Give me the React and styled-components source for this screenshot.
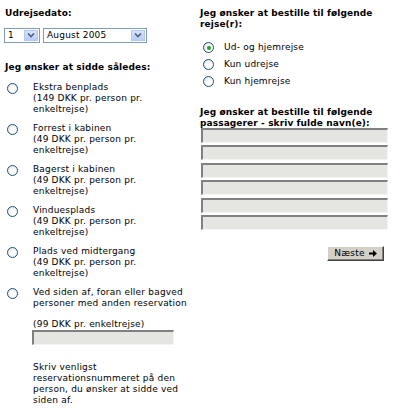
import React from 'react';
import styled, { createGlobalStyle } from 'styled-components';

const GlobalStyle = createGlobalStyle`
  body {
    margin: 0;
    background: #fff;
    font-family: "DejaVu Sans", Verdana, sans-serif;
    font-size: 9px;
    line-height: 11px;
    letter-spacing: 0.2px;
    color: #000;
  }
`;

const Page = styled.div`
  display: flex;
  padding: 8px 0 0 5px;
  width: 400px;
  height: 419px;
  box-sizing: border-box;
`;

const LeftCol = styled.div`
  width: 195px;
  display: flex;
  flex-direction: column;
`;

const RightCol = styled.div`
  width: 188px;
  display: flex;
  flex-direction: column;
`;

const Heading = styled.div`
  font-weight: bold;
  letter-spacing: 0.1px;
  margin-top: ${(p) => p.$top || 0}px;
  margin-bottom: ${(p) => p.$gap || 0}px;
`;

const DateRow = styled.div`
  display: flex;
  gap: 3px;
  margin: 0 0 19px -1px;
`;

const SelectBox = styled.div`
  box-sizing: border-box;
  width: ${(p) => p.$width}px;
  height: 15px;
  border: 1px solid #7f9db9;
  background: #fff;
  display: flex;
  align-items: center;
  padding: 1px;
`;

const SelectValue = styled.span`
  flex: 1;
  padding-left: 2px;
  white-space: nowrap;
`;

const SelectButton = styled.span`
  width: 14px;
  height: 11px;
  background: linear-gradient(#d6e3fd, #b8cdf8);
  border: 1px solid #b5c8f2;
  box-sizing: border-box;
  display: flex;
  align-items: center;
  justify-content: center;
`;

const SeatList = styled.div`
  display: flex;
  flex-direction: column;
  gap: 8px;
  margin-top: 9px;
`;

const SeatOption = styled.div`
  display: flex;
  align-items: flex-start;
`;

const RadioCell = styled.div`
  width: 26px;
  flex: none;
  padding: 1px 0 0 2px;
`;

const Radio = styled.span`
  display: block;
  flex: none;
  box-sizing: border-box;
  width: 11px;
  height: 11px;
  border-radius: 50%;
  border: 1px solid #1c5180;
  background: radial-gradient(circle at 65% 65%, #fff 30%, #dcdcd6 100%);
  position: relative;

  &::after {
    content: '';
    display: ${(p) => (p.$checked ? 'block' : 'none')};
    position: absolute;
    left: 2.5px;
    top: 2.5px;
    width: 4px;
    height: 4px;
    border-radius: 50%;
    background: #21a121;
  }
`;

const SeatText = styled.div`
  display: flex;
  flex-direction: column;
`;

const Note = styled.div`
  margin-top: 10px;
`;

const GreyInput = styled.div`
  box-sizing: border-box;
  flex: none;
  width: ${(p) => p.$width}px;
  height: 15px;
  background: #e5e5e1;
  border-top: 2px solid #808080;
  border-left: 2px solid #808080;
  border-right: 1px solid #f4f4f2;
  border-bottom: 1px solid #f4f4f2;
  margin-left: ${(p) => p.$indent || 0}px;
`;

const Hint = styled.div`
  margin-top: 17px;
  width: 155px;
`;

const TripList = styled.div`
  display: flex;
  flex-direction: column;
  gap: 6px;
  margin: 12px 0 0 3px;
`;

const TripOption = styled.div`
  display: flex;
  align-items: center;
  gap: 10px;
`;

const NameList = styled.div`
  display: flex;
  flex-direction: column;
  gap: 2.4px;
  margin: -1px 0 0 1px;
`;

const ButtonRow = styled.div`
  display: flex;
  justify-content: flex-end;
  margin: 16px 4px 0 0;
`;

const NextButton = styled.button`
  box-sizing: border-box;
  width: 57px;
  height: 15px;
  padding: 0;
  background: #d4d0c8;
  border: 1px solid;
  border-color: #fff #404040 #404040 #fff;
  box-shadow: inset -1px -1px 0 #808080;
  font-family: "DejaVu Sans", Verdana, sans-serif;
  font-size: 9px;
  line-height: 11px;
  letter-spacing: 0.2px;
  color: #000;
  display: flex;
  align-items: center;
  justify-content: center;
  gap: 4px;
`;

const Arrow = () => (
  <svg width="8" height="7" viewBox="0 0 8 7">
    <path d="M0 2.5h4V0l4 3.5-4 3.5V4.5H0z" fill="#000" />
  </svg>
);

const Chevron = () => (
  <svg width="8" height="5" viewBox="0 0 8 5">
    <path d="M1 0.5l3 3 3-3" fill="none" stroke="#4d6185" strokeWidth="1.6" />
  </svg>
);

const Select = ({ width, value }) => (
  <SelectBox $width={width}>
    <SelectValue>{value}</SelectValue>
    <SelectButton>
      <Chevron />
    </SelectButton>
  </SelectBox>
);

const seats = [
  { name: 'Ekstra benplads', price: '(149 DKK pr. person pr.' },
  { name: 'Forrest i kabinen', price: '(49 DKK pr. person pr.' },
  { name: 'Bagerst i kabinen', price: '(49 DKK pr. person pr.' },
  { name: 'Vinduesplads', price: '(49 DKK pr. person pr.' },
  { name: 'Plads ved midtergang', price: '(49 DKK pr. person pr.' },
];

const trips = ['Ud- og hjemrejse', 'Kun udrejse', 'Kun hjemrejse'];

export default function App() {
  return (
    <>
      <GlobalStyle />
      <Page>
        <LeftCol>
          <Heading $gap={9}>Udrejsedato:</Heading>
          <DateRow>
            <Select width={36} value="1" />
            <Select width={104} value="August 2005" />
          </DateRow>
          <Heading>Jeg ønsker at sidde således:</Heading>
          <SeatList>
            {seats.map((seat) => (
              <SeatOption key={seat.name}>
                <RadioCell>
                  <Radio />
                </RadioCell>
                <SeatText>
                  <span>{seat.name}</span>
                  <span>{seat.price}</span>
                  <span>enkeltrejse)</span>
                </SeatText>
              </SeatOption>
            ))}
            <SeatOption>
              <RadioCell>
                <Radio />
              </RadioCell>
              <SeatText>
                <span>Ved siden af, foran eller bagved</span>
                <span>personer med anden reservation</span>
                <Note>(99 DKK pr. enkeltrejse)</Note>
                <GreyInput $width={142} $indent={-1} />
                <Hint>Skriv venligst reservationsnummeret på den person, du ønsker at sidde ved siden af.</Hint>
              </SeatText>
            </SeatOption>
          </SeatList>
        </LeftCol>
        <RightCol>
          <Heading>
            Jeg ønsker at bestille til følgende
            <br />
            rejse(r):
          </Heading>
          <TripList>
            {trips.map((trip, i) => (
              <TripOption key={trip}>
                <Radio $checked={i === 0} />
                <span>{trip}</span>
              </TripOption>
            ))}
          </TripList>
          <Heading $top={20}>
            Jeg ønsker at bestille til følgende
            <br />
            passagerer - skriv fulde navn(e):
          </Heading>
          <NameList>
            {[0, 1, 2, 3, 4, 5].map((n) => (
              <GreyInput key={n} $width={187} />
            ))}
          </NameList>
          <ButtonRow>
            <NextButton type="button">
              Næste <Arrow />
            </NextButton>
          </ButtonRow>
        </RightCol>
      </Page>
    </>
  );
}
